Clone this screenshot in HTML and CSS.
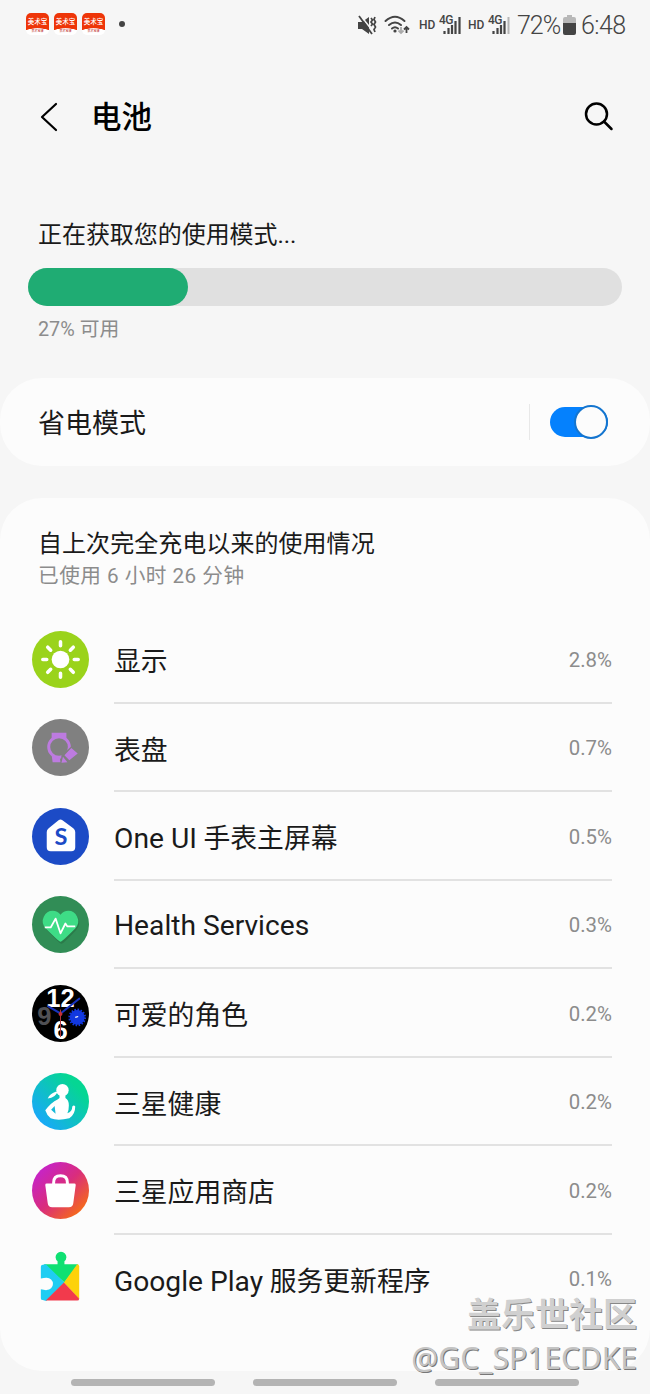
FILE: index.html
```html
<!DOCTYPE html>
<html lang="zh-CN">
<head>
  <meta charset="UTF-8">
  <title>电池</title>
  <meta name="viewport" content="width=device-width, initial-scale=1">
  <link rel="stylesheet" href="styles.css">
</head>
<body>

<div class="statusbar">
  <div class="notifs">
    <span class="app-badge"><b>美术宝</b><i>美术宝课</i></span>
    <span class="app-badge"><b>美术宝</b><i>美术宝课</i></span>
    <span class="app-badge"><b>美术宝</b><i>美术宝课</i></span>
    <span class="dot"></span>
  </div>
  <div class="status">
    <svg class="mute" width="19" height="19" viewBox="0 0 19 19">
      <path d="M0 6h4l7-5v17l-7-5H0z" fill="#444"/>
      <path d="M3 0l14 18" stroke="#f6f6f6" stroke-width="1.500"/>
      <path d="M1 0l13 18" stroke="#444" stroke-width="1.800"/>
      <path d="M13 2l1.500 2-1.500 2 1.500 2-1.500 2M17 1l-1 2.500 1.500 2.500-1.500 2.500 1.500 2.500-1.500 2.500 1 2.500" fill="none" stroke="#444" stroke-width="1.700"/>
    </svg>
    <svg class="wifi" width="26" height="20" viewBox="0 0 26 20">
      <g fill="none" stroke="#444" stroke-width="2" stroke-linecap="round">
        <path d="M1.500 6Q11 -2.500 20.500 6M5 10q6-5 12 0M8 13.500q3-2.500 6 0"/>
      </g>
      <circle cx="11" cy="16" r="1.600" fill="#444"/>
      <path d="M17 12v6M14.500 15.500l2.500 2.500 2.500-2.500" fill="none" stroke="#aaa" stroke-width="1.800"/>
      <path d="M22.500 18v-6M20 14.500l2.500-2.500 2.500 2.500" fill="none" stroke="#444" stroke-width="1.800"/>
    </svg>
    <span class="hd">HD</span>
    <div class="signal">
      <span>4G</span>
      <svg width="18" height="18" viewBox="0 0 18 18"><path d="M1.500 15v3M5.500 12v6M9 9v9M12.500 5v13M16.500 1v17" stroke="#444" stroke-width="2.200"/></svg>
    </div>
    <span class="hd">HD</span>
    <div class="signal">
      <span>4G</span>
      <svg width="18" height="18" viewBox="0 0 18 18"><path d="M1.500 15v3M5.500 12v6M9 9v9M12.500 5v13" stroke="#444" stroke-width="2.200"/><path d="M16.500 1v17" stroke="#b5b5b5" stroke-width="2"/></svg>
    </div>
    <span class="level">72%</span>
    <svg class="batt" width="13" height="20" viewBox="0 0 13 20">
      <path d="M4 0h5v2h2q2 0 2 2v5H0V4q0-2 2-2h2z" fill="#b8b8b8"/>
      <path d="M0 8h13v10q0 2-2 2H2q-2 0-2-2z" fill="#444"/>
    </svg>
    <span class="time">6:48</span>
  </div>
</div>

<header class="topbar">
  <svg class="back" width="18" height="30" viewBox="0 0 18 30"><path d="M16 2L2 15l14 13" fill="none" stroke="#000" stroke-width="2.200" stroke-linecap="round" stroke-linejoin="round"/></svg>
  <h1>电池</h1>
  <svg class="search" width="30" height="30" viewBox="0 0 30 30"><circle cx="12.500" cy="12" r="10.500" fill="none" stroke="#000" stroke-width="2.500"/><path d="M20 19.500l7.500 7.500" stroke="#000" stroke-width="2.500" stroke-linecap="round"/></svg>
</header>

<section class="summary">
  <p class="mode">正在获取您的使用模式...</p>
  <div class="bar"><div class="fill" style="width: 27%"></div></div>
  <p class="left">27% 可用</p>
</section>

<section class="card saver">
  <span>省电模式</span>
  <div class="switch-wrap"><div class="switch"><div class="knob"></div></div></div>
</section>

<section class="card usage">
  <h2>自上次完全充电以来的使用情况</h2>
  <p class="since">已使用 6 小时 26 分钟</p>

  <div class="row">
    <svg class="icon" viewBox="0 0 58 58">
      <circle cx="29" cy="29" r="29" fill="#9ad31b"/>
      <circle cx="29" cy="29" r="9" fill="#fff"/>
      <path d="M29 11v4M29 43v4M11 29h4M43 29h4M16 16.500l3 3M39 39l3 3M42 16.500l-3 3M19 39l-3 3" stroke="#fff" stroke-width="3.600" stroke-linecap="round"/>
    </svg>
    <div class="info"><span>显示</span><em>2.8%</em></div>
  </div>

  <div class="row">
    <svg class="icon" viewBox="0 0 58 58">
      <circle cx="29" cy="29" r="29" fill="#808080"/>
      <path d="M20 14h15v6H20zM20 37h8l1 7h-8z" fill="#bd7be0"/>
      <circle cx="27.500" cy="28.500" r="10.500" fill="#808080" stroke="#bd7be0" stroke-width="3"/>
      <path d="M30 37l10-9 8 7-13 13-6-1z" fill="#808080"/>
      <path d="M40 29.500l6.500 5.500-8.500 7-5-5zM31.500 38.500l4.500 5.500-6 .500z" fill="#bd7be0"/>
    </svg>
    <div class="info"><span>表盘</span><em>0.7%</em></div>
  </div>

  <div class="row">
    <svg class="icon" viewBox="0 0 58 58">
      <circle cx="29" cy="29" r="29" fill="#1c4bc6"/>
      <path d="M27 12.500q2-1.800 4 0l11 8q2 1.500 2 4V40q0 4-4 4H19q-4 0-4-4V24.500q0-2.500 2-4z" fill="#fff"/>
      <text x="29.500" y="38" class="s-letter">S</text>
    </svg>
    <div class="info"><span><span class="latin">One UI</span> 手表主屏幕</span><em>0.5%</em></div>
  </div>

  <div class="row">
    <svg class="icon" viewBox="0 0 58 58">
      <circle cx="29" cy="29" r="29" fill="#318d56"/>
      <path d="M29 47Q27 47 14 33 9 27 12 21 15 15 21 15q5 0 8 4 3-4 8-4 6 0 9 6 3 6-2 12Q31 47 29 47z" fill="#2b7a4a" transform="translate(1 1.500)"/>
      <path d="M29 46.500Q27 46 14 33 9 27 12 21 15 15 21 15q5 0 8 4 3-4 8-4 6 0 9 6 3 6-2 12Q31 46 29 46.500z" fill="#3edc86"/>
      <path d="M13 32h6l5-9 5 15 5-10 2 3h8" fill="none" stroke="#fff" stroke-width="1.800" stroke-linejoin="round"/>
    </svg>
    <div class="info"><span class="latin">Health Services</span><em>0.3%</em></div>
  </div>

  <div class="row">
    <svg class="icon" viewBox="0 0 58 58">
      <circle cx="29" cy="29" r="29" fill="#000"/>
      <text x="29" y="22" class="dial">12</text>
      <text x="29" y="54.500" class="dial">6</text>
      <text x="12.500" y="41" class="dial dim">9</text>
      <circle cx="46" cy="33" r="7.500" fill="#1238e0"/>
      <circle cx="46" cy="33" r="7.500" fill="none" stroke="#1238e0" stroke-width="3" stroke-dasharray="1.500 1.450"/>
      <path d="M44 33l3-1" stroke="#fff" stroke-width="1.200"/>
      <path d="M17 22l12 7L48 14" fill="none" stroke="#1733bd" stroke-width="2.200" stroke-linecap="round"/>
      <path d="M29 25v28" stroke="#b3363b" stroke-width="1"/>
      <circle cx="29" cy="29.500" r="2" fill="#c4303a"/>
    </svg>
    <div class="info"><span>可爱的角色</span><em>0.2%</em></div>
  </div>

  <div class="row">
    <svg class="icon" viewBox="0 0 58 58">
      <defs>
        <linearGradient id="health" x1="0.100" y1="0.900" x2="0.800" y2="0.250">
          <stop offset="0" stop-color="#1aa6ff"/><stop offset="1" stop-color="#05d693"/>
        </linearGradient>
      </defs>
      <circle cx="29" cy="29" r="29" fill="url(#health)"/>
      <circle cx="31" cy="17.500" r="6.300" fill="#fff"/>
      <path d="M26 19q-2 6-10 7 2-5 8-7z" fill="#fff"/>
      <path d="M28 21h6v4.500q3.500 2 3.500 7.500 0 5-1.500 8 5-2 5-7 1.500-2 3 0 0 8-6 12-12 3-19 0-4-3-5.500-8 6-8 12.500-11l2-1.500z" fill="#fff"/>
      <path d="M23 33.500l-3.500 4 4.500 4z" fill="#18b9d8"/>
    </svg>
    <div class="info"><span>三星健康</span><em>0.2%</em></div>
  </div>

  <div class="row">
    <svg class="icon" viewBox="0 0 58 58">
      <defs>
        <linearGradient id="store" x1="0.150" y1="0.150" x2="0.850" y2="0.850">
          <stop offset="0" stop-color="#c724c4"/><stop offset="0.500" stop-color="#d92d7d"/><stop offset="1" stop-color="#f4671f"/>
        </linearGradient>
      </defs>
      <circle cx="29" cy="29" r="29" fill="url(#store)"/>
      <path d="M22 23v-2q0-7 7-7t7 7v2" fill="none" stroke="#fff" stroke-width="3"/>
      <path d="M15 22h28q1.500 0 1.500 1.500L42 42q-.500 4-4.500 4h-17q-4 0-4.500-4l-2.500-18.500Q13.500 22 15 22z" fill="#fff"/>
    </svg>
    <div class="info"><span>三星应用商店</span><em>0.2%</em></div>
  </div>

  <div class="row">
    <svg class="icon" viewBox="0 0 58 58">
      <path d="M12 14.500h14v-3a5.500 5.500 0 1 1 7 0v3h14L33 33z" fill="#0fe072"/>
      <path d="M11 15l3-.500L33 33 14.500 52 11 51q-2 0-2-2v-9q4 1 6 .800a5.500 5.500 0 1 0 0-12.600Q13 28 9 29V17q0-2 2-2z" fill="#1fcdf2"/>
      <path d="M46 14.500q2 0 2 2V50L32.500 33z" fill="#fdd20a"/>
      <path d="M14 51.500L32.500 33 48 49.500q0 2-2 2z" fill="#f23a4c"/>
    </svg>
    <div class="info"><span><span class="latin">Google Play</span> 服务更新程序</span><em>0.1%</em></div>
  </div>
</section>

<nav class="navbar"><i></i><i></i><i></i></nav>

<div class="watermark">
  <div class="wm-name">盖乐世社区</div>
  <div class="wm-user">@GC_SP1ECDKE</div>
</div>

</body>
</html>
```

FILE: styles.css
```css
* {
  box-sizing: border-box;
}
body {
  margin: 0;
  height: 1394px;
  position: relative;
  overflow: hidden;
  font-family: Roboto, 'Noto Sans CJK SC', sans-serif;
  background: #f6f6f6;
  color: #1a1a1a;
}
h1, h2, p {
  margin: 0;
  font-weight: normal;
}
svg {
  display: block;
  flex: none;
  overflow: visible;
}

/* status bar */
.statusbar {
  height: 50px;
  padding: 0 24px 0 26px;
  display: flex;
  justify-content: space-between;
  align-items: center;
  color: #444;
}
.notifs, .status {
  display: flex;
  align-items: center;
}
.notifs {
  gap: 5px;
  padding-bottom: 3px;
}
.app-badge {
  width: 23px;
  height: 22px;
  border-radius: 5px;
  background: radial-gradient(ellipse 17px 7px at 50% 100%, #fff 92%, #ee3508 100%);
  text-align: center;
  white-space: nowrap;
}
.app-badge b, .app-badge i {
  display: block;
  font-style: normal;
}
.app-badge b {
  margin-top: 4px;
  font-size: 6.5px;
  line-height: 10px;
  font-weight: 500;
  color: #fff;
}
.app-badge i {
  margin-top: 2px;
  font-size: 3px;
  line-height: 5px;
  color: #b22;
}
.dot {
  width: 6px;
  height: 6px;
  margin-left: 9px;
  border-radius: 50%;
  background: #444;
}
.mute {
  margin-right: 7px;
}
.wifi {
  margin-right: 9px;
}
.hd {
  width: 20px;
  font-size: 12px;
  font-weight: 500;
}
.signal {
  width: 23px;
  height: 20px;
  margin-right: 6px;
  position: relative;
}
.signal span {
  position: absolute;
  left: 0;
  top: 0;
  font-size: 12px;
  line-height: 10px;
  font-weight: 500;
  letter-spacing: -0.5px;
}
.signal svg {
  margin: 1px 0 0 4px;
}
.level {
  width: 46px;
  font-size: 25px;
  letter-spacing: -1px;
  font-weight: 300;
}
.batt {
  margin-right: 5px;
}
.time {
  width: 45px;
  font-size: 25px;
  font-weight: 300;
  letter-spacing: -0.6px;
}

/* title */
.topbar {
  height: 134px;
  padding: 0 36px 0 40px;
  display: flex;
  align-items: center;
}
.topbar h1 {
  flex: 1;
  margin-left: 33px;
  padding-top: 1px;
  font-size: 30.500px;
  font-weight: 500;
  line-height: 40px;
  color: #000;
}

/* charge summary */
.summary {
  height: 194px;
  padding: 35px 28px 0;
}
.mode {
  padding-left: 10px;
  font-size: 24px;
  line-height: 32px;
  letter-spacing: -0.05px;
}
.bar {
  height: 38px;
  margin-top: 17px;
  border-radius: 19px;
  background: #e0e0e0;
}
.fill {
  height: 38px;
  border-radius: 19px;
  background: #1fac73;
}
.left {
  margin-top: 10px;
  padding-left: 10px;
  font-size: 19.800px;
  line-height: 28px;
  color: #8c8c8c;
}

.card {
  background: #fcfcfc;
  border-radius: 42px;
}
.saver {
  height: 88px;
  padding: 0 42px 0 38px;
  display: flex;
  justify-content: space-between;
  align-items: center;
  font-size: 27px;
}
.saver > span {
  padding-bottom: 2px;
}
.switch-wrap {
  height: 36px;
  padding-left: 20px;
  border-left: 1px solid #e8e8e8;
  display: flex;
  align-items: center;
}
.switch {
  width: 58px;
  height: 30px;
  border-radius: 15px;
  background: #0581fd;
  display: flex;
  align-items: center;
  justify-content: flex-end;
}
.knob {
  flex: none;
  width: 34px;
  height: 34px;
  border: 2px solid #1475cf;
  border-radius: 50%;
  background: #fcfcfc;
}

/* usage list */
.usage {
  height: 873px;
  margin-top: 32px;
  padding: 30px 38px 0 32px;
}
.usage h2 {
  padding-left: 6px;
  font-size: 24px;
  line-height: 32px;
  letter-spacing: 0.05px;
}
.since {
  padding-left: 6px;
  margin-bottom: 23px;
  font-size: 20.700px;
  line-height: 32px;
  letter-spacing: 0.45px;
  color: #8c8c8c;
}
.row {
  height: 88.500px;
  display: flex;
  align-items: center;
  gap: 25px;
}
.icon {
  width: 57px;
  height: 57px;
}
.info {
  flex: 1;
  height: 100%;
  padding-top: 3px;
  display: flex;
  justify-content: space-between;
  align-items: center;
  border-bottom: 2px solid #e2e2e2;
  font-size: 26.800px;
}
.row:last-child .info {
  border-bottom-color: transparent;
}
.latin {
  font-size: 28.200px;
  line-height: 32px;
}
.info > .latin {
  padding-top: 2px;
}
.info em {
  font-style: normal;
  font-size: 20.400px;
  color: #8c8c8c;
}
.s-letter {
  font: bold 24px Lato, sans-serif;
  fill: #1c4bc6;
  text-anchor: middle;
}
.dial {
  font: bold 26px 'Liberation Sans', sans-serif;
  fill: #fff;
  text-anchor: middle;
}
.dim {
  fill: #505054;
}

/* gesture hints */
.navbar {
  height: 23px;
  display: flex;
  justify-content: center;
  gap: 38px;
  padding-top: 8px;
}
.navbar i {
  width: 144px;
  height: 7px;
  border-radius: 4px;
  background: #b4b4b4;
}

.watermark {
  position: absolute;
  right: 13px;
  bottom: 14px;
  text-align: right;
  color: #d0d0d0;
  white-space: nowrap;
}
.wm-name {
  font: bold 34px/46px 'Noto Sans CJK SC', sans-serif;
  text-shadow: 1px 1px 0 #888;
}
.wm-user {
  font: 30px/44px 'Noto Sans', sans-serif;
  color: #c4c4c4;
  text-shadow: 1px 1px 0 #777;
}
```
